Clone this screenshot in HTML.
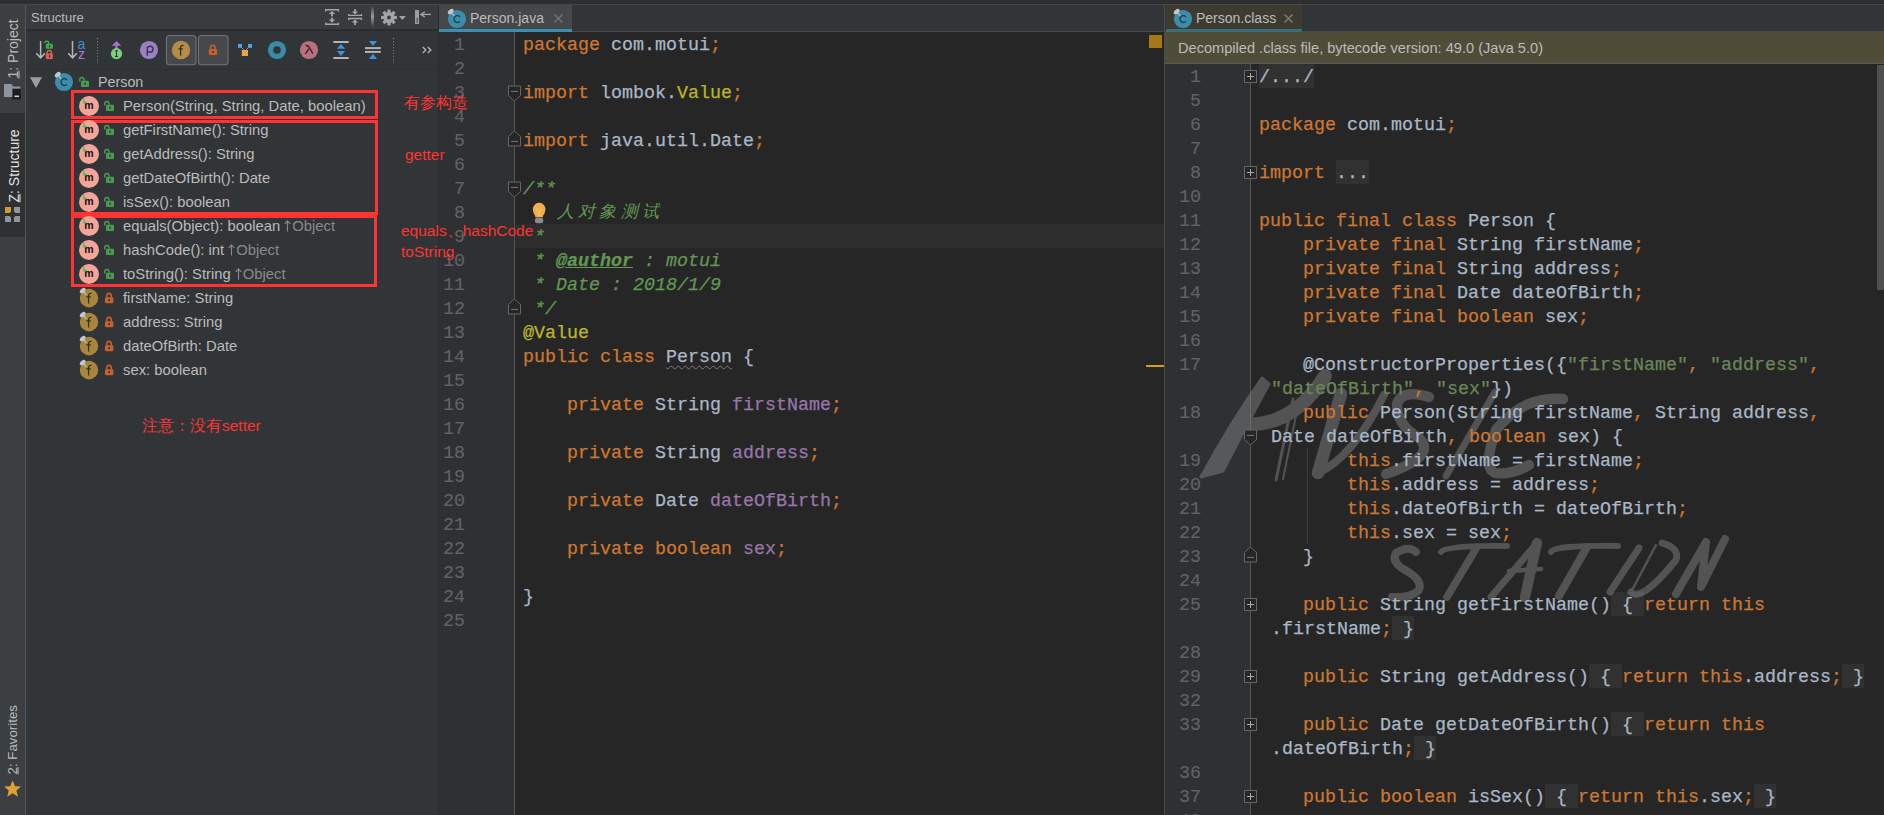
<!DOCTYPE html><html><head><meta charset="utf-8"><style>
*{margin:0;padding:0;box-sizing:border-box}
body{width:1884px;height:815px;overflow:hidden;position:relative;background:#2c2e30;font-family:"Liberation Sans",sans-serif}
div,span,svg{position:absolute}
span{position:static}
.c{font-family:"Liberation Mono",monospace;font-size:18.33px;line-height:24px;height:24px;white-space:pre;color:#a9b7c6;padding-top:2px;-webkit-text-stroke:0.25px currentColor}
.ln{font-family:"Liberation Mono",monospace;font-size:18.33px;line-height:24px;height:24px;white-space:pre;color:#606366;text-align:right;width:60px;padding-top:2px;-webkit-text-stroke:0.15px currentColor}
.ui{font-size:14.8px;color:#bbbbbb;white-space:pre;line-height:24px;height:24px}
.red{color:#ff3333;white-space:pre;font-size:15px}
.box{border:3px solid #ff3333}
</style></head><body>

<div style="left:0;top:4px;width:1884px;height:1px;background:#45484a"></div>
<div style="left:0;top:5px;width:25px;height:810px;background:#3c3f41"></div>
<div style="left:0;top:113px;width:25px;height:124px;background:#2e3032"></div>
<div style="left:25px;top:5px;width:1px;height:810px;background:#555"></div>
<div style="left:26px;top:5px;width:412px;height:810px;background:#323537"></div>
<div style="left:26px;top:5px;width:412px;height:24px;background:#393c3e"></div>
<div style="left:26px;top:29px;width:412px;height:2px;background:#2a2c2e"></div>
<div style="left:26px;top:69px;width:412px;height:1px;background:#2e3032"></div>
<div style="left:438px;top:5px;width:1px;height:810px;background:#2b2b2b"></div>
<div style="left:439px;top:5px;width:725px;height:27px;background:#323537"></div>
<div style="left:439px;top:31px;width:725px;height:1px;background:#47494b"></div>
<div style="left:439px;top:5px;width:133px;height:24px;background:#45484a"></div>
<div style="left:439px;top:29px;width:133px;height:3px;background:#3d8fb0"></div>
<div style="left:439px;top:32px;width:75px;height:783px;background:#2e3032"></div>
<div style="left:514px;top:32px;width:1px;height:783px;background:#555"></div>
<div style="left:515px;top:32px;width:649px;height:783px;background:#262626"></div>
<div style="left:515px;top:224px;width:649px;height:24px;background:#2d2d2d"></div>
<div style="left:1164px;top:5px;width:1px;height:810px;background:#4a4c4e"></div>
<div style="left:1165px;top:5px;width:719px;height:27px;background:#323537"></div>
<div style="left:1165px;top:31px;width:719px;height:1px;background:#47494b"></div>
<div style="left:1166px;top:5px;width:136px;height:24px;background:#3d3b31"></div>
<div style="left:1166px;top:29px;width:136px;height:3px;background:#3d6d78"></div>
<div style="left:1165px;top:32px;width:719px;height:31px;background:#4f4d38"></div>
<div style="left:1165px;top:63px;width:719px;height:1px;background:#5c5c5c"></div>
<div style="left:1165px;top:64px;width:85px;height:751px;background:#2e3032"></div>
<div style="left:1250px;top:64px;width:1px;height:751px;background:#555"></div>
<div style="left:1251px;top:64px;width:633px;height:751px;background:#262626"></div>
<div style="left:1877px;top:65px;width:7px;height:225px;background:#4f4f4f"></div>
<svg width="1884" height="815" style="left:0;top:0"><g opacity="0.5"><path d="M1201,477 L1223,471 Q1244,430 1269,384 L1262,378 Q1232,420 1201,477 Z" fill="#808080" stroke="#808080" stroke-width="3" stroke-linejoin="round"/><g fill="none" stroke="#808080" stroke-linecap="round" stroke-linejoin="round"><path d="M1243,424 Q1292,428 1325,376" stroke-width="13.8"/><path d="M1293,399 L1276,480" stroke-width="3.0"/><path d="M1299,401 L1283,479" stroke-width="2.0"/><path d="M1341,394 L1318,473" stroke-width="12.6"/><path d="M1318,473 Q1352,458 1384,395" stroke-width="8.0"/><path d="M1429,397 Q1402,389 1397,404 Q1396,424 1419,438 Q1438,456 1386,474" stroke-width="10.3"/><path d="M1495,392 L1446,476" stroke-width="6.9"/><path d="M1563,399 Q1522,396 1496,430 Q1482,468 1495,473 Q1512,475 1529,465" stroke-width="10.3"/><path d="M1416,552 Q1409,545 1396,553 Q1391,562 1405,570 Q1423,580 1419,590 Q1412,598 1392,597" stroke-width="8.0"/><path d="M1441,552 Q1445,545 1507,546" stroke-width="5.8"/><path d="M1477,547 L1447,597" stroke-width="7.5"/><path d="M1491,597 L1537,543" stroke-width="6.9"/><path d="M1537,543 L1525,597" stroke-width="10.3"/><path d="M1509,571 L1541,569" stroke-width="4.6"/><path d="M1551,552 Q1554,545 1618,546" stroke-width="5.8"/><path d="M1587,547 L1559,596" stroke-width="8.0"/><path d="M1639,548 L1610,592" stroke-width="6.9"/><path d="M1656,545 L1631,592" stroke-width="2.5"/><path d="M1631,592 Q1641,603 1676,560 Q1680,548 1662,543" stroke-width="6.9"/><path d="M1676,594 L1706,542 L1701,587 L1725,539" stroke-width="8.0"/></g></g></svg>
<div class="ln" style="left:405px;top:32px">1</div>
<div class="c" style="left:523px;top:32px"><span style="color:#cc7832;">package</span><span style="color:#a9b7c6;"> com.motui</span><span style="color:#cc7832;">;</span></div>
<div class="ln" style="left:405px;top:56px">2</div>
<div class="ln" style="left:405px;top:80px">3</div>
<div class="c" style="left:523px;top:80px"><span style="color:#cc7832;">import</span><span style="color:#a9b7c6;"> lombok.</span><span style="color:#bbb529;">Value</span><span style="color:#cc7832;">;</span></div>
<div class="ln" style="left:405px;top:104px">4</div>
<div class="ln" style="left:405px;top:128px">5</div>
<div class="c" style="left:523px;top:128px"><span style="color:#cc7832;">import</span><span style="color:#a9b7c6;"> java.util.Date</span><span style="color:#cc7832;">;</span></div>
<div class="ln" style="left:405px;top:152px">6</div>
<div class="ln" style="left:405px;top:176px">7</div>
<div class="c" style="left:523px;top:176px"><span style="color:#629755;font-style:italic">/**</span></div>
<div class="ln" style="left:405px;top:200px">8</div>
<div class="ln" style="left:405px;top:224px">9</div>
<div class="c" style="left:523px;top:224px"><span style="color:#629755;font-style:italic"> *</span></div>
<div class="ln" style="left:405px;top:248px">10</div>
<div class="c" style="left:523px;top:248px"><span style="color:#629755;font-style:italic"> * </span><span style="color:#629755;font-style:italic;font-weight:bold;text-decoration:underline">@author</span><span style="color:#629755;font-style:italic"> : motui</span></div>
<div class="ln" style="left:405px;top:272px">11</div>
<div class="c" style="left:523px;top:272px"><span style="color:#629755;font-style:italic"> * Date : 2018/1/9</span></div>
<div class="ln" style="left:405px;top:296px">12</div>
<div class="c" style="left:523px;top:296px"><span style="color:#629755;font-style:italic"> */</span></div>
<div class="ln" style="left:405px;top:320px">13</div>
<div class="c" style="left:523px;top:320px"><span style="color:#bbb529;">@Value</span></div>
<div class="ln" style="left:405px;top:344px">14</div>
<div class="c" style="left:523px;top:344px"><span style="color:#cc7832;">public class </span><span style="color:#a9b7c6;text-decoration:underline wavy #7a7a7a;text-decoration-thickness:1px;text-underline-offset:3px">Person</span><span style="color:#a9b7c6;"> {</span></div>
<div class="ln" style="left:405px;top:368px">15</div>
<div class="ln" style="left:405px;top:392px">16</div>
<div class="c" style="left:523px;top:392px"><span style="color:#cc7832;">    private </span><span style="color:#a9b7c6;">String </span><span style="color:#9876aa;">firstName</span><span style="color:#cc7832;">;</span></div>
<div class="ln" style="left:405px;top:416px">17</div>
<div class="ln" style="left:405px;top:440px">18</div>
<div class="c" style="left:523px;top:440px"><span style="color:#cc7832;">    private </span><span style="color:#a9b7c6;">String </span><span style="color:#9876aa;">address</span><span style="color:#cc7832;">;</span></div>
<div class="ln" style="left:405px;top:464px">19</div>
<div class="ln" style="left:405px;top:488px">20</div>
<div class="c" style="left:523px;top:488px"><span style="color:#cc7832;">    private </span><span style="color:#a9b7c6;">Date </span><span style="color:#9876aa;">dateOfBirth</span><span style="color:#cc7832;">;</span></div>
<div class="ln" style="left:405px;top:512px">21</div>
<div class="ln" style="left:405px;top:536px">22</div>
<div class="c" style="left:523px;top:536px"><span style="color:#cc7832;">    private boolean </span><span style="color:#9876aa;">sex</span><span style="color:#cc7832;">;</span></div>
<div class="ln" style="left:405px;top:560px">23</div>
<div class="ln" style="left:405px;top:584px">24</div>
<div class="c" style="left:523px;top:584px"><span style="color:#a9b7c6;">}</span></div>
<div class="ln" style="left:405px;top:608px">25</div>
<div class="c" style="left:557px;top:200px;font-family:'Liberation Sans',sans-serif;font-size:17px;letter-spacing:4.2px;color:#629755;font-style:italic;padding-top:0;-webkit-text-stroke:0">人对象测试</div>
<div style="left:1259px;top:64px;width:55px;height:24px;background:rgba(255,255,255,0.05)"></div>
<div style="left:1336px;top:160px;width:33px;height:24px;background:rgba(255,255,255,0.05)"></div>
<div style="left:1611px;top:592px;width:33px;height:24px;background:rgba(255,255,255,0.05)"></div>
<div style="left:1392px;top:616px;width:22px;height:24px;background:rgba(255,255,255,0.05)"></div>
<div style="left:1589px;top:664px;width:33px;height:24px;background:rgba(255,255,255,0.05)"></div>
<div style="left:1842px;top:664px;width:22px;height:24px;background:rgba(255,255,255,0.05)"></div>
<div style="left:1611px;top:712px;width:33px;height:24px;background:rgba(255,255,255,0.05)"></div>
<div style="left:1414px;top:736px;width:22px;height:24px;background:rgba(255,255,255,0.05)"></div>
<div style="left:1545px;top:784px;width:33px;height:24px;background:rgba(255,255,255,0.05)"></div>
<div style="left:1754px;top:784px;width:22px;height:24px;background:rgba(255,255,255,0.05)"></div>
<div class="ln" style="left:1141px;top:64px">1</div>
<div class="c" style="left:1259px;top:64px"><span style="color:#a9b7c6;">/.../</span></div>
<div class="ln" style="left:1141px;top:88px">5</div>
<div class="ln" style="left:1141px;top:112px">6</div>
<div class="c" style="left:1259px;top:112px"><span style="color:#cc7832;">package</span><span style="color:#a9b7c6;"> com.motui</span><span style="color:#cc7832;">;</span></div>
<div class="ln" style="left:1141px;top:136px">7</div>
<div class="ln" style="left:1141px;top:160px">8</div>
<div class="c" style="left:1259px;top:160px"><span style="color:#cc7832;">import</span><span style="color:#a9b7c6;"> ...</span></div>
<div class="ln" style="left:1141px;top:184px">10</div>
<div class="ln" style="left:1141px;top:208px">11</div>
<div class="c" style="left:1259px;top:208px"><span style="color:#cc7832;">public final class </span><span style="color:#a9b7c6;">Person {</span></div>
<div class="ln" style="left:1141px;top:232px">12</div>
<div class="c" style="left:1259px;top:232px"><span style="color:#cc7832;">    private final </span><span style="color:#a9b7c6;">String firstName</span><span style="color:#cc7832;">;</span></div>
<div class="ln" style="left:1141px;top:256px">13</div>
<div class="c" style="left:1259px;top:256px"><span style="color:#cc7832;">    private final </span><span style="color:#a9b7c6;">String address</span><span style="color:#cc7832;">;</span></div>
<div class="ln" style="left:1141px;top:280px">14</div>
<div class="c" style="left:1259px;top:280px"><span style="color:#cc7832;">    private final </span><span style="color:#a9b7c6;">Date dateOfBirth</span><span style="color:#cc7832;">;</span></div>
<div class="ln" style="left:1141px;top:304px">15</div>
<div class="c" style="left:1259px;top:304px"><span style="color:#cc7832;">    private final boolean </span><span style="color:#a9b7c6;">sex</span><span style="color:#cc7832;">;</span></div>
<div class="ln" style="left:1141px;top:328px">16</div>
<div class="ln" style="left:1141px;top:352px">17</div>
<div class="c" style="left:1259px;top:352px"><span style="color:#a9b7c6;">    @ConstructorProperties({</span><span style="color:#6a8759;">"firstName"</span><span style="color:#cc7832;">, </span><span style="color:#6a8759;">"address"</span><span style="color:#cc7832;">,</span></div>
<div class="c" style="left:1271px;top:376px"><span style="color:#6a8759;">"dateOfBirth"</span><span style="color:#cc7832;">, </span><span style="color:#6a8759;">"sex"</span><span style="color:#a9b7c6;">})</span></div>
<div class="ln" style="left:1141px;top:400px">18</div>
<div class="c" style="left:1259px;top:400px"><span style="color:#cc7832;">    public </span><span style="color:#a9b7c6;">Person(String firstName</span><span style="color:#cc7832;">, </span><span style="color:#a9b7c6;">String address</span><span style="color:#cc7832;">,</span></div>
<div class="c" style="left:1271px;top:424px"><span style="color:#a9b7c6;">Date dateOfBirth</span><span style="color:#cc7832;">, </span><span style="color:#cc7832;">boolean </span><span style="color:#a9b7c6;">sex) {</span></div>
<div class="ln" style="left:1141px;top:448px">19</div>
<div class="c" style="left:1259px;top:448px"><span style="color:#cc7832;">        this</span><span style="color:#a9b7c6;">.firstName = firstName</span><span style="color:#cc7832;">;</span></div>
<div class="ln" style="left:1141px;top:472px">20</div>
<div class="c" style="left:1259px;top:472px"><span style="color:#cc7832;">        this</span><span style="color:#a9b7c6;">.address = address</span><span style="color:#cc7832;">;</span></div>
<div class="ln" style="left:1141px;top:496px">21</div>
<div class="c" style="left:1259px;top:496px"><span style="color:#cc7832;">        this</span><span style="color:#a9b7c6;">.dateOfBirth = dateOfBirth</span><span style="color:#cc7832;">;</span></div>
<div class="ln" style="left:1141px;top:520px">22</div>
<div class="c" style="left:1259px;top:520px"><span style="color:#cc7832;">        this</span><span style="color:#a9b7c6;">.sex = sex</span><span style="color:#cc7832;">;</span></div>
<div class="ln" style="left:1141px;top:544px">23</div>
<div class="c" style="left:1259px;top:544px"><span style="color:#a9b7c6;">    }</span></div>
<div class="ln" style="left:1141px;top:568px">24</div>
<div class="ln" style="left:1141px;top:592px">25</div>
<div class="c" style="left:1259px;top:592px"><span style="color:#cc7832;">    public </span><span style="color:#a9b7c6;">String getFirstName() { </span><span style="color:#cc7832;">return this</span></div>
<div class="c" style="left:1271px;top:616px"><span style="color:#a9b7c6;">.firstName</span><span style="color:#cc7832;">;</span><span style="color:#a9b7c6;"> }</span></div>
<div class="ln" style="left:1141px;top:640px">28</div>
<div class="ln" style="left:1141px;top:664px">29</div>
<div class="c" style="left:1259px;top:664px"><span style="color:#cc7832;">    public </span><span style="color:#a9b7c6;">String getAddress() { </span><span style="color:#cc7832;">return this</span><span style="color:#a9b7c6;">.address</span><span style="color:#cc7832;">;</span><span style="color:#a9b7c6;"> }</span></div>
<div class="ln" style="left:1141px;top:688px">32</div>
<div class="ln" style="left:1141px;top:712px">33</div>
<div class="c" style="left:1259px;top:712px"><span style="color:#cc7832;">    public </span><span style="color:#a9b7c6;">Date getDateOfBirth() { </span><span style="color:#cc7832;">return this</span></div>
<div class="c" style="left:1271px;top:736px"><span style="color:#a9b7c6;">.dateOfBirth</span><span style="color:#cc7832;">;</span><span style="color:#a9b7c6;"> }</span></div>
<div class="ln" style="left:1141px;top:760px">36</div>
<div class="ln" style="left:1141px;top:784px">37</div>
<div class="c" style="left:1259px;top:784px"><span style="color:#cc7832;">    public boolean </span><span style="color:#a9b7c6;">isSex() { </span><span style="color:#cc7832;">return this</span><span style="color:#a9b7c6;">.sex</span><span style="color:#cc7832;">;</span><span style="color:#a9b7c6;"> }</span></div>
<div class="ln" style="left:1141px;top:808px">40</div>
<div class="ui" style="left:31px;top:6px;font-size:13px;">Structure</div>
<div class="ui" style="left:-17px;top:40px;width:59px;font-size:14px;height:18px;line-height:18px;transform:rotate(-90deg);transform-origin:center;text-align:center"><span style="text-decoration:underline">1</span>: Project</div>
<div class="ui" style="left:-23px;top:157px;width:73px;font-size:14px;height:18px;line-height:18px;transform:rotate(-90deg);transform-origin:center;text-align:center;color:#e0e0e0"><span style="text-decoration:underline">Z</span>: Structure</div>
<div class="ui" style="left:-22px;top:731px;width:69px;font-size:13.3px;height:18px;line-height:18px;transform:rotate(-90deg);transform-origin:center;text-align:center"><span style="text-decoration:underline">2</span>: Favorites</div>
<div class="ui" style="left:470px;top:6px;font-size:14px;">Person.java</div>
<div class="ui" style="left:1196px;top:6px;font-size:14px;">Person.class</div>
<div class="ui" style="left:1178px;top:36px;font-size:14.6px;">Decompiled .class file, bytecode version: 49.0 (Java 5.0)</div>
<div class="ui" style="left:98px;top:70px;font-size:14.3px">Person</div>
<div class="ui" style="left:123px;top:94px">Person(String, String, Date, boolean)</div>
<div class="ui" style="left:123px;top:118px">getFirstName(): String</div>
<div class="ui" style="left:123px;top:142px">getAddress(): String</div>
<div class="ui" style="left:123px;top:166px">getDateOfBirth(): Date</div>
<div class="ui" style="left:123px;top:190px">isSex(): boolean</div>
<div class="ui" style="left:123px;top:214px">equals(Object): boolean <svg width="7" height="12" style="position:static;vertical-align:-1px;margin-right:1px"><path d="M3.5,11.5 V1 M0.8,3.8 L3.5,0.8 L6.2,3.8" stroke="#8a8a8a" stroke-width="1.1" fill="none"/></svg><span style="color:#8a8a8a">Object</span></div>
<div class="ui" style="left:123px;top:238px">hashCode(): int <svg width="7" height="12" style="position:static;vertical-align:-1px;margin-right:1px"><path d="M3.5,11.5 V1 M0.8,3.8 L3.5,0.8 L6.2,3.8" stroke="#8a8a8a" stroke-width="1.1" fill="none"/></svg><span style="color:#8a8a8a">Object</span></div>
<div class="ui" style="left:123px;top:262px">toString(): String <svg width="7" height="12" style="position:static;vertical-align:-1px;margin-right:1px"><path d="M3.5,11.5 V1 M0.8,3.8 L3.5,0.8 L6.2,3.8" stroke="#8a8a8a" stroke-width="1.1" fill="none"/></svg><span style="color:#8a8a8a">Object</span></div>
<div class="ui" style="left:123px;top:286px">firstName: String</div>
<div class="ui" style="left:123px;top:310px">address: String</div>
<div class="ui" style="left:123px;top:334px">dateOfBirth: Date</div>
<div class="ui" style="left:123px;top:358px">sex: boolean</div>
<div class="box" style="left:71px;top:90px;width:307px;height:29px"></div>
<div class="box" style="left:71px;top:120px;width:307px;height:95px"></div>
<div class="box" style="left:71px;top:215px;width:306px;height:72px"></div>
<div class="red" style="left:404px;top:93px;font-size:15.5px">有参构造</div>
<div class="red" style="left:405px;top:146px;font-size:15.5px">getter</div>
<div class="red" style="left:401px;top:221px;font-size:15.5px">equals、hashCode</div>
<div class="red" style="left:401px;top:243px;font-size:15.5px">toString</div>
<div class="red" style="left:142px;top:416px;font-size:15.5px">注意：没有setter</div>
<svg width="1884" height="815" style="left:0;top:0"><path d="M325.7,11.6 V9.7 H338.4 V11.6 M325.7,22.4 V24.3 H338.4 V22.4" stroke="#a4a4a4" stroke-width="1.4" fill="none"/><path d="M328.8,14 L332,11 L335.2,14 Z M328.8,19.6 L332,22.8 L335.2,19.6 Z" fill="#a4a4a4"/><path d="M332,13.5 V16.3 M332,17.6 V20" stroke="#a4a4a4" stroke-width="1.8"/><path d="M348.7,13.9 V15.4 H361.4 V13.9 M348.7,20 V18.5 H361.4 V20" stroke="#a4a4a4" stroke-width="1.4" fill="none"/><path d="M351.8,11.6 L355,14.4 L358.2,11.6 Z M351.8,22.4 L355,19.6 L358.2,22.4 Z" fill="#a4a4a4"/><path d="M355,9 V12 M355,22 V25" stroke="#a4a4a4" stroke-width="1.8"/><defs><linearGradient id="sepg" x1="0" y1="0" x2="0" y2="1"><stop offset="0" stop-color="#3a3d3f"/><stop offset="0.5" stop-color="#9a9a9a"/><stop offset="1" stop-color="#3a3d3f"/></linearGradient></defs><rect x="371" y="6" width="3" height="21" fill="url(#sepg)"/><g fill="#a4a4a4"><rect x="387.4" y="9.6" width="3.2" height="4" transform="rotate(0 389 17.5)"/><rect x="387.4" y="9.6" width="3.2" height="4" transform="rotate(45 389 17.5)"/><rect x="387.4" y="9.6" width="3.2" height="4" transform="rotate(90 389 17.5)"/><rect x="387.4" y="9.6" width="3.2" height="4" transform="rotate(135 389 17.5)"/><rect x="387.4" y="9.6" width="3.2" height="4" transform="rotate(180 389 17.5)"/><rect x="387.4" y="9.6" width="3.2" height="4" transform="rotate(225 389 17.5)"/><rect x="387.4" y="9.6" width="3.2" height="4" transform="rotate(270 389 17.5)"/><rect x="387.4" y="9.6" width="3.2" height="4" transform="rotate(315 389 17.5)"/></g><circle cx="389" cy="17.5" r="5.6" fill="#a4a4a4"/><circle cx="389" cy="17.5" r="1.9" fill="#393c3e"/><path d="M399,16 H405.8 L402.4,20 Z" fill="#a4a4a4"/><rect x="415" y="10" width="4" height="14" fill="#9c9c9c"/><rect x="416.7" y="18" width="0.9" height="5" fill="#3a3a3a"/><path d="M421,14.4 H431" stroke="#a4a4a4" stroke-width="1.3"/><path d="M424.8,11.8 L420.8,14.4 L424.8,17" stroke="#a4a4a4" stroke-width="1.3" fill="none"/><path d="M40.6,41 V57.8 M36.300000000000004,53.2 L40.6,57.8 L44.9,53.2" stroke="#b6b6b6" stroke-width="1.5" fill="none"/><path d="M72.5,41 V57.8 M68.2,53.2 L72.5,57.8 L76.8,53.2" stroke="#b6b6b6" stroke-width="1.5" fill="none"/><path d="M44.5,43 A2.3,2.3 0 0 1 48.7,42.4 V44" stroke="#3aaf50" stroke-width="1.4" fill="none"/><rect x="45.9" y="43.7" width="6.9" height="5" rx="0.8" fill="#3aaf50"/><rect x="49" y="45.3" width="1.1" height="2" fill="#222"/><path d="M47.2,54 V52.6 A2.1,2.1 0 0 1 51.4,52.6 V54" stroke="#e0604e" stroke-width="1.4" fill="none"/><rect x="45.9" y="53.5" width="6.9" height="5.6" rx="0.8" fill="#e0604e"/><rect x="49" y="55.2" width="1.1" height="2.2" fill="#222"/><text x="77.6" y="48.8" font-family="Liberation Sans" font-size="14" fill="#3d90c8">a</text><text x="77.9" y="58.8" font-family="Liberation Sans" font-size="14" fill="#a97dd0">z</text><line x1="97.5" y1="38.2" x2="97.5" y2="63" stroke="#8a8a8a" stroke-width="1" stroke-dasharray="1,2"/><line x1="393.5" y1="38.2" x2="393.5" y2="63" stroke="#8a8a8a" stroke-width="1" stroke-dasharray="1,2"/><path d="M111.7,45.8 L116.5,41 L121.3,45.8 Z" fill="#a672c8"/><rect x="115.3" y="45.5" width="2.4" height="3.6" fill="#a672c8"/><circle cx="116.5" cy="53.6" r="5.6" fill="#7cd27c"/><path d="M115,50.8 H118 M116.5,50.8 V56.4 M115,56.4 H118" stroke="#2b2b2b" stroke-width="1"/><circle cx="149" cy="50" r="9.05" fill="#9a80c4"/><path d="M147.3,55.8 V46.6 M147.3,47.6 Q149,46 150.6,46.3 Q153,46.8 153,49.3 Q153,52 150.4,52.2 Q148.6,52.3 147.3,51" stroke="#3b3048" stroke-width="1.4" fill="none"/><rect x="166.5" y="35.5" width="29.5" height="29.3" rx="3" fill="#45494b" stroke="#6f7376" stroke-width="1.1"/><rect x="198.5" y="35.5" width="29.5" height="29.3" rx="3" fill="#45494b" stroke="#6f7376" stroke-width="1.1"/><circle cx="181" cy="50" r="9.2" fill="#b38d45"/><path d="M180.6,55.4 V47.5 Q180.6,45.2 183.6,45.4 M178.4,48.8 H182.8" stroke="#3a2e1c" stroke-width="1.3" fill="none"/><path d="M210.60000000000002,49.9 V47.5 A2.2,2.2 0 0 1 215.0,47.5 V49.9" stroke="#c4622d" stroke-width="1.6" fill="none"/><rect x="208.8" y="49.199999999999996" width="8.3" height="5.9" rx="1" fill="#c4622d"/><rect x="212.20000000000002" y="51.1" width="1.5" height="1.8" fill="#3a2a22"/><path d="M241,47 L244.5,50.5 M249,47 L245.5,50.5" stroke="#8a8a8a" stroke-width="1"/><rect x="238" y="44" width="4" height="3.8" fill="#4fa8de"/><rect x="248" y="44" width="4" height="3.8" fill="#4fa8de"/><rect x="241.8" y="50" width="6.2" height="6" fill="#e0a550"/><circle cx="277" cy="50" r="6.45" fill="none" stroke="#3a8ba6" stroke-width="5.3"/><circle cx="309" cy="50" r="9.1" fill="#b8707c"/><path d="M305.6,45.6 Q308.4,45 309.4,47.6 L312.8,53.8 M309,48.6 L305.4,53.8" stroke="#2e2226" stroke-width="1.3" fill="none"/><rect x="333.3" y="41" width="15.4" height="2" fill="#b4b4b4"/><rect x="333.3" y="57" width="15.4" height="2" fill="#b4b4b4"/><path d="M336.8,48.8 L341,43.9 L345.2,48.8 Z M336.8,50.9 L345.2,50.9 L341,56.1 Z" fill="#3d94d4"/><rect x="365" y="47.1" width="15.8" height="2" fill="#b4b4b4"/><rect x="365" y="50.9" width="15.8" height="2" fill="#b4b4b4"/><path d="M368.9,41 L377,41 L373,46 Z M368.9,59 L377,59 L373,53.8 Z" fill="#3d94d4"/><path d="M422.8,47 L425.8,50 L422.8,53 M427.8,47 L430.8,50 L427.8,53" stroke="#b0b0b0" stroke-width="1.4" fill="none"/><path d="M30,77.2 H42 L36,88 Z" fill="#9d9d9d"/><circle cx="64" cy="82" r="9.1" fill="#3b8dab"/><path d="M66.9,79.8 A3.4,3.4 0 1 0 66.9,84.4" stroke="#25373f" stroke-width="1.25" fill="none"/><ellipse cx="57.7" cy="74.6" rx="3.4" ry="2" transform="rotate(-40 57.7 74.6)" fill="#c3c7cb"/><line x1="58.8" y1="76.2" x2="61.2" y2="78.6" stroke="#c3c7cb" stroke-width="1.2"/><path d="M79.8,81.5 V79.6 A2.1,2.1 0 0 1 84,79.6 V80.8" stroke="#4a9a4f" stroke-width="1.5" fill="none"/><rect x="81" y="80.8" width="8" height="6.2" rx="1" fill="#4a9a4f"/><rect x="84.3" y="82.8" width="1.5" height="2" fill="#2c3a2c"/><circle cx="89" cy="106" r="10" fill="#f3a59a"/><text x="84.3" y="108.7" font-family="Liberation Sans" font-weight="bold" font-size="10.5" fill="#111">m</text><path d="M83.8,98.8 V102.4 H87" stroke="#4cc24c" stroke-width="1.5" fill="none"/><path d="M104.8,105.5 V103.6 A2.1,2.1 0 0 1 109,103.6 V104.8" stroke="#4a9a4f" stroke-width="1.5" fill="none"/><rect x="106" y="104.8" width="8" height="6.2" rx="1" fill="#4a9a4f"/><rect x="109.3" y="106.8" width="1.5" height="2" fill="#2c3a2c"/><circle cx="89" cy="130" r="10" fill="#f3a59a"/><text x="84.3" y="132.7" font-family="Liberation Sans" font-weight="bold" font-size="10.5" fill="#111">m</text><path d="M83.8,122.8 V126.4 H87" stroke="#4cc24c" stroke-width="1.5" fill="none"/><path d="M104.8,129.5 V127.6 A2.1,2.1 0 0 1 109,127.6 V128.8" stroke="#4a9a4f" stroke-width="1.5" fill="none"/><rect x="106" y="128.8" width="8" height="6.2" rx="1" fill="#4a9a4f"/><rect x="109.3" y="130.8" width="1.5" height="2" fill="#2c3a2c"/><circle cx="89" cy="154" r="10" fill="#f3a59a"/><text x="84.3" y="156.7" font-family="Liberation Sans" font-weight="bold" font-size="10.5" fill="#111">m</text><path d="M83.8,146.8 V150.4 H87" stroke="#4cc24c" stroke-width="1.5" fill="none"/><path d="M104.8,153.5 V151.6 A2.1,2.1 0 0 1 109,151.6 V152.8" stroke="#4a9a4f" stroke-width="1.5" fill="none"/><rect x="106" y="152.8" width="8" height="6.2" rx="1" fill="#4a9a4f"/><rect x="109.3" y="154.8" width="1.5" height="2" fill="#2c3a2c"/><circle cx="89" cy="178" r="10" fill="#f3a59a"/><text x="84.3" y="180.7" font-family="Liberation Sans" font-weight="bold" font-size="10.5" fill="#111">m</text><path d="M83.8,170.8 V174.4 H87" stroke="#4cc24c" stroke-width="1.5" fill="none"/><path d="M104.8,177.5 V175.6 A2.1,2.1 0 0 1 109,175.6 V176.8" stroke="#4a9a4f" stroke-width="1.5" fill="none"/><rect x="106" y="176.8" width="8" height="6.2" rx="1" fill="#4a9a4f"/><rect x="109.3" y="178.8" width="1.5" height="2" fill="#2c3a2c"/><circle cx="89" cy="202" r="10" fill="#f3a59a"/><text x="84.3" y="204.7" font-family="Liberation Sans" font-weight="bold" font-size="10.5" fill="#111">m</text><path d="M83.8,194.8 V198.4 H87" stroke="#4cc24c" stroke-width="1.5" fill="none"/><path d="M104.8,201.5 V199.6 A2.1,2.1 0 0 1 109,199.6 V200.8" stroke="#4a9a4f" stroke-width="1.5" fill="none"/><rect x="106" y="200.8" width="8" height="6.2" rx="1" fill="#4a9a4f"/><rect x="109.3" y="202.8" width="1.5" height="2" fill="#2c3a2c"/><circle cx="89" cy="226" r="10" fill="#f3a59a"/><text x="84.3" y="228.7" font-family="Liberation Sans" font-weight="bold" font-size="10.5" fill="#111">m</text><path d="M83.8,218.8 V222.4 H87" stroke="#4cc24c" stroke-width="1.5" fill="none"/><path d="M104.8,225.5 V223.6 A2.1,2.1 0 0 1 109,223.6 V224.8" stroke="#4a9a4f" stroke-width="1.5" fill="none"/><rect x="106" y="224.8" width="8" height="6.2" rx="1" fill="#4a9a4f"/><rect x="109.3" y="226.8" width="1.5" height="2" fill="#2c3a2c"/><circle cx="89" cy="250" r="10" fill="#f3a59a"/><text x="84.3" y="252.7" font-family="Liberation Sans" font-weight="bold" font-size="10.5" fill="#111">m</text><path d="M83.8,242.8 V246.4 H87" stroke="#4cc24c" stroke-width="1.5" fill="none"/><path d="M104.8,249.5 V247.6 A2.1,2.1 0 0 1 109,247.6 V248.8" stroke="#4a9a4f" stroke-width="1.5" fill="none"/><rect x="106" y="248.8" width="8" height="6.2" rx="1" fill="#4a9a4f"/><rect x="109.3" y="250.8" width="1.5" height="2" fill="#2c3a2c"/><circle cx="89" cy="274" r="10" fill="#f3a59a"/><text x="84.3" y="276.7" font-family="Liberation Sans" font-weight="bold" font-size="10.5" fill="#111">m</text><path d="M83.8,266.8 V270.4 H87" stroke="#4cc24c" stroke-width="1.5" fill="none"/><path d="M104.8,273.5 V271.6 A2.1,2.1 0 0 1 109,271.6 V272.8" stroke="#4a9a4f" stroke-width="1.5" fill="none"/><rect x="106" y="272.8" width="8" height="6.2" rx="1" fill="#4a9a4f"/><rect x="109.3" y="274.8" width="1.5" height="2" fill="#2c3a2c"/><circle cx="89" cy="298" r="9.2" fill="#a8873c"/><path d="M88.6,303.4 V295.5 Q88.6,293.2 91.6,293.4 M86.4,296.8 H90.8" stroke="#3a2e1c" stroke-width="1.3" fill="none"/><ellipse cx="82.7" cy="290.6" rx="3.4" ry="2" transform="rotate(-40 82.7 290.6)" fill="#c3c7cb"/><line x1="83.8" y1="292.2" x2="86.2" y2="294.6" stroke="#c3c7cb" stroke-width="1.2"/><path d="M106.8,298 V295.6 A2.2,2.2 0 0 1 111.2,295.6 V298" stroke="#c4622d" stroke-width="1.6" fill="none"/><rect x="105" y="297.3" width="8.3" height="5.9" rx="1" fill="#c4622d"/><rect x="108.4" y="299.2" width="1.5" height="1.8" fill="#3a2a22"/><circle cx="89" cy="322" r="9.2" fill="#a8873c"/><path d="M88.6,327.4 V319.5 Q88.6,317.2 91.6,317.4 M86.4,320.8 H90.8" stroke="#3a2e1c" stroke-width="1.3" fill="none"/><ellipse cx="82.7" cy="314.6" rx="3.4" ry="2" transform="rotate(-40 82.7 314.6)" fill="#c3c7cb"/><line x1="83.8" y1="316.2" x2="86.2" y2="318.6" stroke="#c3c7cb" stroke-width="1.2"/><path d="M106.8,322 V319.6 A2.2,2.2 0 0 1 111.2,319.6 V322" stroke="#c4622d" stroke-width="1.6" fill="none"/><rect x="105" y="321.3" width="8.3" height="5.9" rx="1" fill="#c4622d"/><rect x="108.4" y="323.2" width="1.5" height="1.8" fill="#3a2a22"/><circle cx="89" cy="346" r="9.2" fill="#a8873c"/><path d="M88.6,351.4 V343.5 Q88.6,341.2 91.6,341.4 M86.4,344.8 H90.8" stroke="#3a2e1c" stroke-width="1.3" fill="none"/><ellipse cx="82.7" cy="338.6" rx="3.4" ry="2" transform="rotate(-40 82.7 338.6)" fill="#c3c7cb"/><line x1="83.8" y1="340.2" x2="86.2" y2="342.6" stroke="#c3c7cb" stroke-width="1.2"/><path d="M106.8,346 V343.6 A2.2,2.2 0 0 1 111.2,343.6 V346" stroke="#c4622d" stroke-width="1.6" fill="none"/><rect x="105" y="345.3" width="8.3" height="5.9" rx="1" fill="#c4622d"/><rect x="108.4" y="347.2" width="1.5" height="1.8" fill="#3a2a22"/><circle cx="89" cy="370" r="9.2" fill="#a8873c"/><path d="M88.6,375.4 V367.5 Q88.6,365.2 91.6,365.4 M86.4,368.8 H90.8" stroke="#3a2e1c" stroke-width="1.3" fill="none"/><ellipse cx="82.7" cy="362.6" rx="3.4" ry="2" transform="rotate(-40 82.7 362.6)" fill="#c3c7cb"/><line x1="83.8" y1="364.2" x2="86.2" y2="366.6" stroke="#c3c7cb" stroke-width="1.2"/><path d="M106.8,370 V367.6 A2.2,2.2 0 0 1 111.2,367.6 V370" stroke="#c4622d" stroke-width="1.6" fill="none"/><rect x="105" y="369.3" width="8.3" height="5.9" rx="1" fill="#c4622d"/><rect x="108.4" y="371.2" width="1.5" height="1.8" fill="#3a2a22"/><path d="M4,84 H11.5 L13,86.5 H20.3 V97 H4 Z" fill="#8b969d"/><rect x="12.4" y="88.7" width="8.5" height="10.7" fill="#1c1c1c"/><rect x="14.5" y="95.5" width="4.5" height="1.6" fill="#d0d0d0"/><rect x="5" y="207" width="6" height="6" fill="#d19b2a"/><rect x="14" y="207" width="6" height="6" fill="#8b969d"/><rect x="5" y="216" width="6" height="6" fill="#8b969d"/><rect x="14" y="216" width="6" height="6" fill="#8b969d"/><path d="M10,212 L15,217 M15,212 L10,217" stroke="#2e3032" stroke-width="1"/><path d="M12.6,780.5 L15,786.3 L21,786.6 L16.4,790.5 L18,796.8 L12.6,793.3 L7.2,796.8 L8.8,790.5 L4.2,786.6 L10.2,786.3 Z" fill="#e0a132"/><circle cx="457" cy="19" r="9.1" fill="#3b8dab"/><path d="M459.9,16.8 A3.4,3.4 0 1 0 459.9,21.4" stroke="#25373f" stroke-width="1.25" fill="none"/><ellipse cx="450.7" cy="11.6" rx="3.4" ry="2" transform="rotate(-40 450.7 11.6)" fill="#c3c7cb"/><line x1="451.8" y1="13.2" x2="454.2" y2="15.6" stroke="#c3c7cb" stroke-width="1.2"/><path d="M554.5,14.5 L562.5,22.5 M562.5,14.5 L554.5,22.5" stroke="#747678" stroke-width="1.2"/><circle cx="1183" cy="19" r="9.1" fill="#3b8dab"/><path d="M1185.9,16.8 A3.4,3.4 0 1 0 1185.9,21.4" stroke="#25373f" stroke-width="1.25" fill="none"/><ellipse cx="1176.7" cy="11.6" rx="3.4" ry="2" transform="rotate(-40 1176.7 11.6)" fill="#c3c7cb"/><line x1="1177.8" y1="13.2" x2="1180.2" y2="15.6" stroke="#c3c7cb" stroke-width="1.2"/><path d="M1284.5,14.5 L1292.5,22.5 M1292.5,14.5 L1284.5,22.5" stroke="#7f7f78" stroke-width="1.3"/><path d="M508.5,86 H520.5 V95.5 L514.5,101 L508.5,95.5 Z" fill="#262626" stroke="#666" stroke-width="1"/><line x1="511.0" y1="91.4" x2="518.0" y2="91.4" stroke="#777" stroke-width="1"/><path d="M508.5,146 H520.5 V136.5 L514.5,131 L508.5,136.5 Z" fill="#262626" stroke="#666" stroke-width="1"/><line x1="511.0" y1="141.4" x2="518.0" y2="141.4" stroke="#777" stroke-width="1"/><path d="M508.5,182 H520.5 V191.5 L514.5,197 L508.5,191.5 Z" fill="#262626" stroke="#666" stroke-width="1"/><line x1="511.0" y1="187.4" x2="518.0" y2="187.4" stroke="#777" stroke-width="1"/><path d="M508.5,314 H520.5 V304.5 L514.5,299 L508.5,304.5 Z" fill="#262626" stroke="#666" stroke-width="1"/><line x1="511.0" y1="309.4" x2="518.0" y2="309.4" stroke="#777" stroke-width="1"/><path d="M533,210.5 A6.3,6.3 0 1 1 545.3,210.5 Q545,213.5 543.2,215.5 L542.8,217.2 H535.4 L535,215.5 Q533.2,213.5 533,210.5 Z" fill="#f3ae4a"/><path d="M536.5,209 L539.1,212 L541.7,209 M539.1,212 V216" stroke="#f8d08a" stroke-width="0.8" fill="none"/><rect x="535" y="217.8" width="8.2" height="5.4" rx="2" fill="#8a8a8a"/><rect x="1149" y="35" width="13" height="13" fill="#a47a17"/><rect x="1146" y="365" width="18" height="2" fill="#d4a017"/><rect x="1244.5" y="70.5" width="12" height="12" fill="#262626" stroke="#666" stroke-width="1"/><path d="M1247.0,76.5 H1254.0 M1250.5,73.0 V80.0" stroke="#aaa" stroke-width="1"/><rect x="1244.5" y="166.5" width="12" height="12" fill="#262626" stroke="#666" stroke-width="1"/><path d="M1247.0,172.5 H1254.0 M1250.5,169.0 V176.0" stroke="#aaa" stroke-width="1"/><path d="M1244.5,430 H1256.5 V439.5 L1250.5,445 L1244.5,439.5 Z" fill="#262626" stroke="#666" stroke-width="1"/><line x1="1247.0" y1="435.4" x2="1254.0" y2="435.4" stroke="#777" stroke-width="1"/><path d="M1244.5,562 H1256.5 V552.5 L1250.5,547 L1244.5,552.5 Z" fill="#262626" stroke="#666" stroke-width="1"/><line x1="1247.0" y1="557.4" x2="1254.0" y2="557.4" stroke="#777" stroke-width="1"/><rect x="1244.5" y="598.5" width="12" height="12" fill="#262626" stroke="#666" stroke-width="1"/><path d="M1247.0,604.5 H1254.0 M1250.5,601.0 V608.0" stroke="#aaa" stroke-width="1"/><rect x="1244.5" y="670.5" width="12" height="12" fill="#262626" stroke="#666" stroke-width="1"/><path d="M1247.0,676.5 H1254.0 M1250.5,673.0 V680.0" stroke="#aaa" stroke-width="1"/><rect x="1244.5" y="718.5" width="12" height="12" fill="#262626" stroke="#666" stroke-width="1"/><path d="M1247.0,724.5 H1254.0 M1250.5,721.0 V728.0" stroke="#aaa" stroke-width="1"/><rect x="1244.5" y="790.5" width="12" height="12" fill="#262626" stroke="#666" stroke-width="1"/><path d="M1247.0,796.5 H1254.0 M1250.5,793.0 V800.0" stroke="#aaa" stroke-width="1"/><line x1="1307.5" y1="448" x2="1307.5" y2="544" stroke="#3b3b3b" stroke-width="1"/></svg>
</body></html>
